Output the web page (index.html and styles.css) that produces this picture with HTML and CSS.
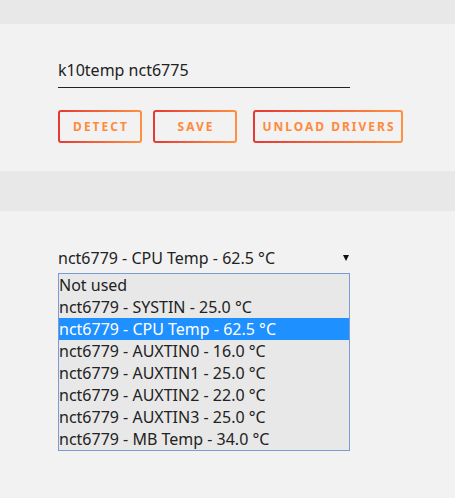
FILE: index.html
```html
<!DOCTYPE html>
<html lang="en">
<head>
    <meta charset="UTF-8">
    <title>Sensors</title>
    <link rel="stylesheet" href="styles.css">
</head>
<body>
    <div class="bar top"></div>

    <section class="panel drivers">
        <div class="field">
            <input type="text" value="k10temp nct6775">
        </div>
        <div class="actions">
            <button class="btn">Detect</button>
            <button class="btn">Save</button>
            <button class="btn wide">Unload drivers</button>
        </div>
    </section>

    <div class="bar"></div>

    <section class="panel sensor">
        <div class="select">
            <span>nct6779 - CPU Temp - 62.5 °C</span>
            <span class="arrow"></span>
        </div>
        <ul class="options">
            <li>Not used</li>
            <li>nct6779 - SYSTIN - 25.0 °C</li>
            <li class="selected">nct6779 - CPU Temp - 62.5 °C</li>
            <li>nct6779 - AUXTIN0 - 16.0 °C</li>
            <li>nct6779 - AUXTIN1 - 25.0 °C</li>
            <li>nct6779 - AUXTIN2 - 22.0 °C</li>
            <li>nct6779 - AUXTIN3 - 25.0 °C</li>
            <li>nct6779 - MB Temp - 34.0 °C</li>
        </ul>
    </section>
</body>
</html>
```
FILE: styles.css
```css
body {
    margin: 0;
    background: #f2f2f2;
    font-family: 'Noto Sans', sans-serif;
    color: #222;
}

.bar {
    height: 40px;
    background: #e8e8e8;
}

.bar.top {
    height: 24px;
}

.panel {
    padding-left: 58px;
}

.drivers {
    padding-top: 31px;
    padding-bottom: 28px;
}

.field input {
    width: 292px;
    box-sizing: border-box;
    height: 33px;
    padding: 0 0 3px;
    border: none;
    border-bottom: 1px solid #222;
    background: transparent;
    font-family: inherit;
    font-size: 16px;
    color: #222;
    outline: none;
}

.actions {
    display: flex;
    margin-top: 22px;
}

.btn {
    width: 84px;
    height: 33px;
    margin-right: 11px;
    padding: 0 0 0 2px;
    border: 2px solid transparent;
    border-radius: 3px;
    background: linear-gradient(#f2f2f2, #f2f2f2) padding-box,
                linear-gradient(90deg, #e53935, #ff9140) border-box;
    color: #ff8a3c;
    font-family: inherit;
    font-size: 12px;
    font-weight: bold;
    letter-spacing: 2px;
    text-transform: uppercase;
    white-space: nowrap;
}

.btn.wide {
    width: 150px;
    margin-left: 5px;
}

.sensor {
    padding-top: 36px;
}

.select {
    width: 292px;
    display: flex;
    justify-content: space-between;
    align-items: center;
    font-size: 16px;
    height: 22px;
    padding-bottom: 4px;
}

.arrow {
    width: 0;
    height: 0;
    margin-right: 1px;
    border-left: 3px solid transparent;
    border-right: 3px solid transparent;
    border-top: 6px solid #111;
}

.options {
    list-style: none;
    margin: 0;
    padding: 0;
    width: 292px;
    box-sizing: border-box;
    border: 1px solid #7b9bd4;
    background: #e8e8e8;
}

.options li {
    height: 22px;
    line-height: 22px;
    font-size: 16px;
    white-space: nowrap;
}

.options li.selected {
    background: #1e90ff;
    color: #fff;
}
```
